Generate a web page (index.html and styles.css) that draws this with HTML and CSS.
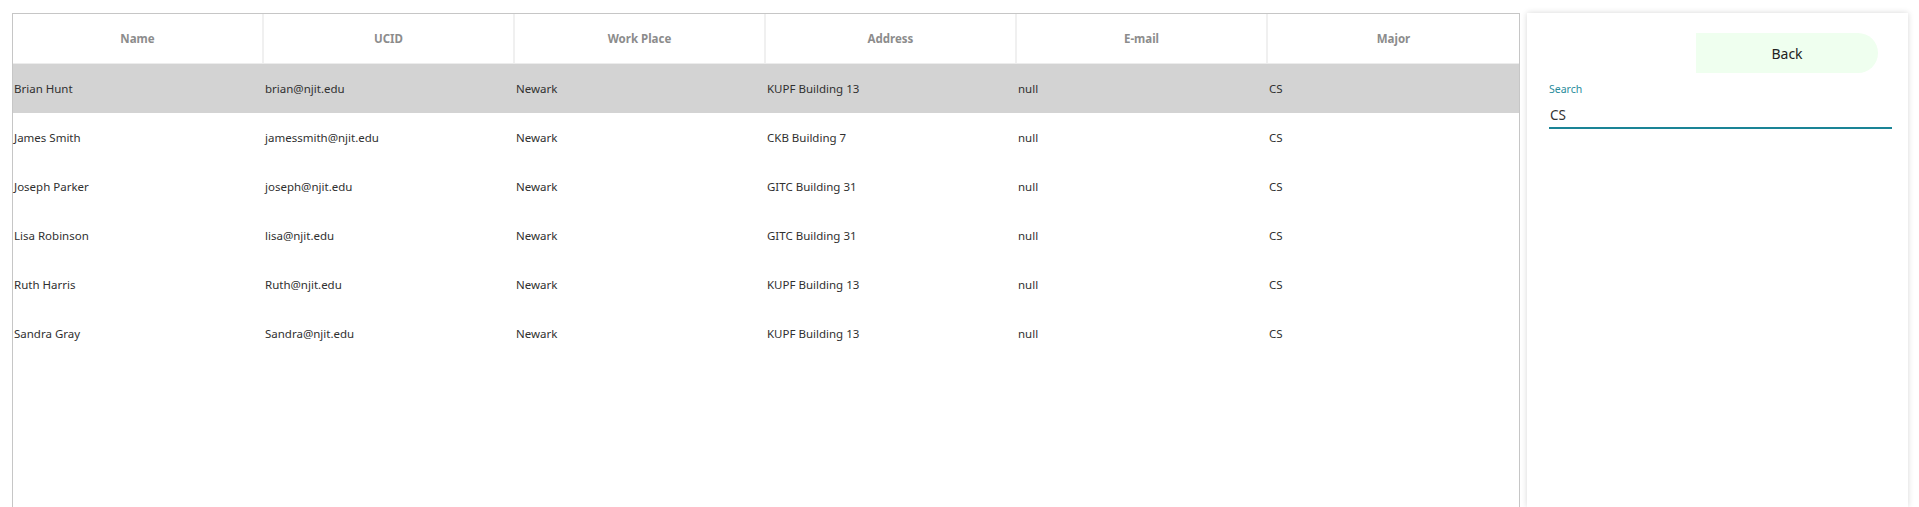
FILE: index.html
```html
<!DOCTYPE html>
<html lang="en">
<head>
<meta charset="utf-8">
<title>Students</title>
<link rel="stylesheet" href="styles.css">
</head>
<body>
<div class="page">
  <div class="table">
    <div class="thead">
      <div class="th">Name</div>
      <div class="th">UCID</div>
      <div class="th">Work Place</div>
      <div class="th">Address</div>
      <div class="th">E-mail</div>
      <div class="th last">Major</div>
    </div>
    <div class="tr selected">
      <div class="td">Brian Hunt</div><div class="td">brian@njit.edu</div><div class="td">Newark</div><div class="td">KUPF Building 13</div><div class="td">null</div><div class="td">CS</div>
    </div>
    <div class="tr">
      <div class="td">James Smith</div><div class="td">jamessmith@njit.edu</div><div class="td">Newark</div><div class="td">CKB Building 7</div><div class="td">null</div><div class="td">CS</div>
    </div>
    <div class="tr">
      <div class="td">Joseph Parker</div><div class="td">joseph@njit.edu</div><div class="td">Newark</div><div class="td">GITC Building 31</div><div class="td">null</div><div class="td">CS</div>
    </div>
    <div class="tr">
      <div class="td">Lisa Robinson</div><div class="td">lisa@njit.edu</div><div class="td">Newark</div><div class="td">GITC Building 31</div><div class="td">null</div><div class="td">CS</div>
    </div>
    <div class="tr">
      <div class="td">Ruth Harris</div><div class="td">Ruth@njit.edu</div><div class="td">Newark</div><div class="td">KUPF Building 13</div><div class="td">null</div><div class="td">CS</div>
    </div>
    <div class="tr">
      <div class="td">Sandra Gray</div><div class="td">Sandra@njit.edu</div><div class="td">Newark</div><div class="td">KUPF Building 13</div><div class="td">null</div><div class="td">CS</div>
    </div>
  </div>
  <aside class="panel">
    <div class="actions">
      <button class="back">Back</button>
    </div>
    <label class="field">
      <span class="field-label">Search</span>
      <span class="field-value">CS</span>
    </label>
  </aside>
</div>
</body>
</html>
```
FILE: styles.css
```css
* { box-sizing: border-box; }
html, body { margin: 0; padding: 0; background: #fff; }
body {
  font-family: "Noto Sans", "Open Sans", sans-serif;
  color: #333;
  height: 507px;
  overflow: hidden;
}
.page {
  display: flex;
  gap: 7px;
  padding: 13px 11px 0 12px;
  height: 100%;
}
.table {
  width: 1508px;
  flex: none;
  border: 1px solid #c6c6c6;
  border-bottom: none;
  background: #fff;
}
.thead, .tr {
  display: grid;
  grid-template-columns: repeat(6, 251px);
}
.thead {
  height: 50px;
  border-bottom: 1px solid #ececec;
}
.th {
  display: flex;
  align-items: center;
  justify-content: center;
  font-size: 11.5px;
  font-weight: 700;
  color: #8c8c8c;
  border-right: 2px solid #f0f0f0;
}
.th.last { border-right: none; }
.tr { height: 49px; }
.tr.selected { background: #d3d3d3; }
.td {
  display: flex;
  align-items: center;
  padding-left: 1px;
  font-size: 11.5px;
  color: #303030;
  white-space: nowrap;
}
.panel {
  width: 381px;
  flex: none;
  background: #fff;
  box-shadow: 0 0 6px rgba(0,0,0,0.16);
  padding: 20px 16px 0 22px;
}
.actions {
  display: flex;
  justify-content: flex-end;
  padding-right: 14px;
}
.back {
  width: 182px;
  height: 40px;
  border: none;
  background: #efffef;
  border-radius: 0 20px 20px 0;
  font-family: "Noto Sans", "Open Sans", sans-serif;
  font-size: 14px;
  color: #222;
}
.field {
  display: flex;
  flex-direction: column;
  margin-top: 9px;
  border-bottom: 2px solid #1a8496;
}
.field-label {
  font-size: 10.5px;
  color: #2a8c9c;
  line-height: 14px;
}
.field-value {
  font-size: 13.5px;
  color: #333;
  line-height: 20px;
  padding: 9px 0 2px 1px;
}
```
